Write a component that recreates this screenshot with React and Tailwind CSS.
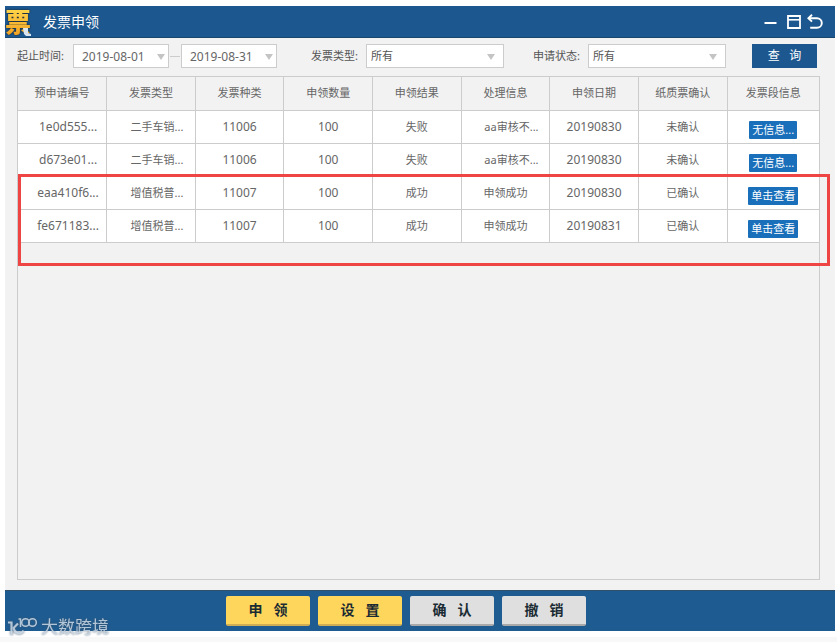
import { useState } from "react";

const COLUMNS = [
  "预申请编号",
  "发票类型",
  "发票种类",
  "申领数量",
  "申领结果",
  "处理信息",
  "申领日期",
  "纸质票确认",
  "发票段信息",
];

const ROWS = [
  { id: "1e0d555...", type: "二手车销...", kind: "11006", count: 100, result: "失败", info: "aa审核不...", date: "20190830", confirm: "未确认", action: "无信息..." },
  { id: "d673e01...", type: "二手车销...", kind: "11006", count: 100, result: "失败", info: "aa审核不...", date: "20190830", confirm: "未确认", action: "无信息..." },
  { id: "eaa410f6...", type: "增值税普...", kind: "11007", count: 100, result: "成功", info: "申领成功", date: "20190830", confirm: "已确认", action: "单击查看" },
  { id: "fe671183...", type: "增值税普...", kind: "11007", count: 100, result: "成功", info: "申领成功", date: "20190831", confirm: "已确认", action: "单击查看" },
];

const ACTIONS = [
  { label: "申   领", primary: true },
  { label: "设   置", primary: true },
  { label: "确   认", primary: false },
  { label: "撤   销", primary: false },
];

function DateField({ label, value, onChange }) {
  return (
    <div className="relative w-24">
      <input
        type="text"
        aria-label={label}
        value={value}
        onChange={(e) => onChange(e.target.value)}
        className="w-full h-6 pl-2 pr-4 text-xs text-[#666] bg-white border border-[#ccc] outline-none"
      />
      <svg viewBox="0 0 8 6" className="w-2 h-1.5 absolute right-1 top-2.5 pointer-events-none">
        <path d="M0 0h8L4 6z" fill="#c4c4c4" />
      </svg>
    </div>
  );
}

function SelectField({ id, label, options, className }) {
  return (
    <div className={`flex items-center gap-2 ${className}`}>
      <label htmlFor={id}>{label}</label>
      <div className="relative w-[138px]">
        <select
          id={id}
          className="w-full h-6 px-1 text-[11px] text-[#555] bg-white border border-[#ccc] appearance-none outline-none"
        >
          {options.map((o) => (
            <option key={o}>{o}</option>
          ))}
        </select>
        <svg viewBox="0 0 8 6" className="w-2 h-1.5 absolute right-[9px] top-2.5 pointer-events-none">
          <path d="M0 0h8L4 6z" fill="#c4c4c4" />
        </svg>
      </div>
    </div>
  );
}

function TitleBar() {
  return (
    <header className="flex items-center h-8 pr-3 bg-[#1c588f] border-b border-[#17466f] text-white">
      <div className="relative w-[26px] h-7 mr-3">
        <span className="block text-[26px] leading-7 font-black text-transparent bg-clip-text bg-linear-to-b from-[#ffd84a] to-[#f0a020] drop-shadow-[0_0_1px_#222]">
          票
        </span>
        <svg viewBox="0 0 8 8" className="w-2 h-2 absolute right-0 bottom-0">
          <path d="M0 0h5v5l3 1v2H3L1 6z" fill="#d9e6f2" />
        </svg>
      </div>
      <h1 className="flex-1 text-sm">发票申领</h1>
      <div className="flex items-center gap-2.5">
        <button aria-label="最小化">
          <svg viewBox="0 0 13 14" className="w-[13px] h-3.5 block" fill="none" stroke="currentColor">
            <path d="M0.5 8h12" strokeWidth="2" />
          </svg>
        </button>
        <button aria-label="最大化">
          <svg viewBox="0 0 14 14" className="w-3.5 h-3.5 block" fill="none" stroke="currentColor">
            <path d="M1 1h12v12H1z" strokeWidth="1.8" />
            <path d="M1 4.8h12" strokeWidth="1.6" />
          </svg>
        </button>
        <button aria-label="返回" className="-ml-1">
          <svg viewBox="0 0 16 16" className="w-4 h-4 block" fill="none" stroke="currentColor" strokeWidth="1.9">
            <path d="M5 0.8L1.4 4.2l3.6 3.4" />
            <path d="M1.4 4.2h8.6a4.8 4.8 0 0 1 0 9.6H3.2" />
          </svg>
        </button>
      </div>
    </header>
  );
}

function Filters() {
  const [start, setStart] = useState("2019-08-01");
  const [end, setEnd] = useState("2019-08-31");

  return (
    <div className="flex items-center h-9 pl-3 pr-[18px] text-[11px] text-[#555]">
      <span className="w-14">起止时间:</span>
      <DateField label="开始日期" value={start} onChange={setStart} />
      <span className="w-3 px-px">
        <span className="block h-px bg-[#ccc]" />
      </span>
      <DateField label="结束日期" value={end} onChange={setEnd} />
      <SelectField id="type" className="ml-[34px]" label="发票类型:" options={["所有", "二手车销售发票", "增值税普通发票"]} />
      <SelectField id="status" className="ml-[29px]" label="申请状态:" options={["所有", "成功", "失败"]} />
      <button className="w-[65px] h-6 ml-auto bg-[#1c588f] text-white text-xs whitespace-pre">查   询</button>
    </div>
  );
}

function RecordTable() {
  return (
    <table className="w-full table-fixed border-collapse text-center text-[11px] leading-4 text-[#666]">
      <thead>
        <tr className="h-[33px]">
          {COLUMNS.map((c) => (
            <th key={c} className="p-0 font-normal border-r border-b border-[#ccc] last:border-r-0 last:w-[92px]">
              {c}
            </th>
          ))}
        </tr>
      </thead>
      <tbody className="bg-white">
        {ROWS.map((r) => (
          <tr key={r.id} className="h-[33px] *:p-0 *:border-r *:border-b *:border-[#ccc]">
            <td className="text-xs">
              <span className="pl-3">{r.id}</span>
            </td>
            <td>
              <span className="pl-3">{r.type}</span>
            </td>
            <td className="text-xs">{r.kind}</td>
            <td className="text-xs">{r.count}</td>
            <td>{r.result}</td>
            <td>{r.info.endsWith("...") ? <span className="pl-3">{r.info}</span> : r.info}</td>
            <td className="text-xs">{r.date}</td>
            <td>{r.confirm}</td>
            <td className="last:border-r-0">
              <button className="h-[18px] px-[3px] mt-1.5 block mx-auto rounded-[1px] bg-[#1a6fba] text-white text-[11px] leading-4">
                {r.action}
              </button>
            </td>
          </tr>
        ))}
      </tbody>
    </table>
  );
}

function Watermark() {
  return (
    <div className="absolute left-0.5 -bottom-1.5 flex items-center gap-1 text-[#c3d2e2] opacity-90 pointer-events-none drop-shadow-[0_0_1px_#456]">
      <svg viewBox="0 0 30 20" className="w-[30px] h-5" fill="none" stroke="currentColor" strokeWidth="1.5">
        <path d="M1 5.5h3.5V18" strokeWidth="2.2" />
        <path d="M11 6.5L6.5 11c1 5 7 7.500 10 2.500" strokeWidth="2.2" />
        <path d="M11.500 2h2v8" />
        <circle cx="18.5" cy="5.5" r="3.800" />
        <circle cx="25.5" cy="5.5" r="3.800" />
      </svg>
      <span className="text-[17px] leading-5">大数跨境</span>
    </div>
  );
}

export default function App() {
  return (
    <div className="min-h-screen flex flex-col bg-white font-['Noto_Sans','Noto_Sans_CJK_SC',sans-serif]">
      <div className="flex-1 flex flex-col mt-1.5 mb-1.5 ml-[5px] mr-0.5 bg-[#f2f2f2]">
        <TitleBar />
        <Filters />
        <main className="relative flex-1 ml-3 mr-[15px] mt-0.5 mb-2.5 border border-[#ccc]">
          <RecordTable />
          <div className="absolute left-0 -right-[11px] top-[97px] h-[92px] border-3 border-[#ee4444] pointer-events-none" />
        </main>
        <footer className="relative flex justify-center gap-2 h-[41px] pt-[5px] pr-7 bg-[#1d5b91] border-t border-[#2f4f6b]">
          {ACTIONS.map((a) => (
            <button
              key={a.label}
              className={`w-[84px] h-[30px] rounded-xs border-b-2 text-sm font-bold whitespace-pre text-[#1a2b33] ${
                a.primary ? "bg-[#ffd65c] border-[#cfae55]" : "bg-[#dfdfdf] border-[#a9a9a9]"
              }`}
            >
              {a.label}
            </button>
          ))}
          <Watermark />
        </footer>
      </div>
      <div className="h-[5px] bg-[#f8f8f8]" />
    </div>
  );
}
